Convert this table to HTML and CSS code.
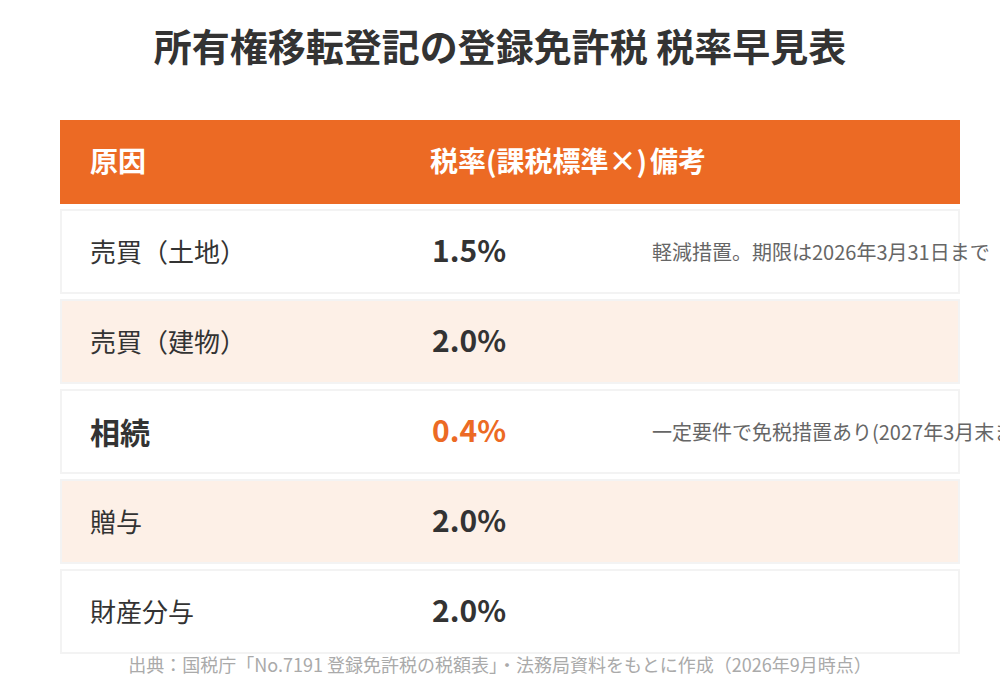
FILE: index.html
```html
<!DOCTYPE html>
<html lang="ja">
<head>
<meta charset="utf-8">
<title>所有権移転登記の登録免許税 税率早見表</title>
<link rel="stylesheet" href="styles.css">
</head>
<body>
<main class="page">
  <h1 class="title">所有権移転登記の登録免許税 税率早見表</h1>
  <div class="table">
    <div class="row head">
      <div class="cell">原因</div>
      <div class="cell">税率(課税標準×)</div>
      <div class="cell">備考</div>
    </div>
    <div class="row">
      <div class="cell label">売買（土地）</div>
      <div class="cell rate">1.5%</div>
      <div class="cell note">軽減措置。期限は2026年3月31日まで</div>
    </div>
    <div class="row alt">
      <div class="cell label">売買（建物）</div>
      <div class="cell rate">2.0%</div>
      <div class="cell note"></div>
    </div>
    <div class="row">
      <div class="cell label strong">相続</div>
      <div class="cell rate accent">0.4%</div>
      <div class="cell note">一定要件で免税措置あり(2027年3月末まで)</div>
    </div>
    <div class="row alt">
      <div class="cell label">贈与</div>
      <div class="cell rate">2.0%</div>
      <div class="cell note"></div>
    </div>
    <div class="row">
      <div class="cell label">財産分与</div>
      <div class="cell rate">2.0%</div>
      <div class="cell note"></div>
    </div>
  </div>
  <p class="source">出典：国税庁「No.7191 登録免許税の税額表」・法務局資料をもとに作成（2026年9月時点）</p>
</main>
</body>
</html>
```

FILE: styles.css
```css
html, body {
  margin: 0;
  padding: 0;
  background: #ffffff;
  overflow-x: hidden;
}

body {
  font-family: "Noto Sans CJK JP", "Noto Sans", sans-serif;
  color: #333333;
}

.page {
  width: 1000px;
  padding-top: 17px;
}

.title {
  margin: 0 0 48px;
  font-size: 38px;
  line-height: 55px;
  font-weight: 700;
  text-align: center;
  color: #333333;
  white-space: nowrap;
}

.table {
  display: flex;
  flex-direction: column;
  gap: 5px;
  width: 900px;
  margin-left: 60px;
}

.row {
  display: grid;
  grid-template-columns: 340px 220px 1fr;
  align-items: center;
  height: 85px;
  box-sizing: border-box;
  border: 2px solid #f3f3f3;
  background: #ffffff;
}

.row.alt {
  background: #fdf0e7;
}

.row.head {
  height: 84px;
  border: none;
  background: #ec6a24;
  color: #ffffff;
  font-size: 28px;
  font-weight: 700;
}

.head .cell {
  margin-top: -4px;
}

.cell {
  padding-left: 30px;
  white-space: nowrap;
}

.row:not(.head) .cell:first-child {
  padding-left: 28px;
}

.label {
  font-size: 26px;
  color: #333333;
  margin-top: -2px;
}

.label.strong {
  font-size: 30px;
  font-weight: 700;
}

.rate {
  font-size: 30px;
  font-weight: 700;
  color: #333333;
  margin-top: -6px;
}

.rate.accent {
  color: #ec6a24;
}

.note {
  font-size: 20px;
  color: #666666;
}

.source {
  margin: -3px 0 0;
  font-size: 18px;
  line-height: 26px;
  text-align: center;
  color: #aaaaaa;
  white-space: nowrap;
}
```
